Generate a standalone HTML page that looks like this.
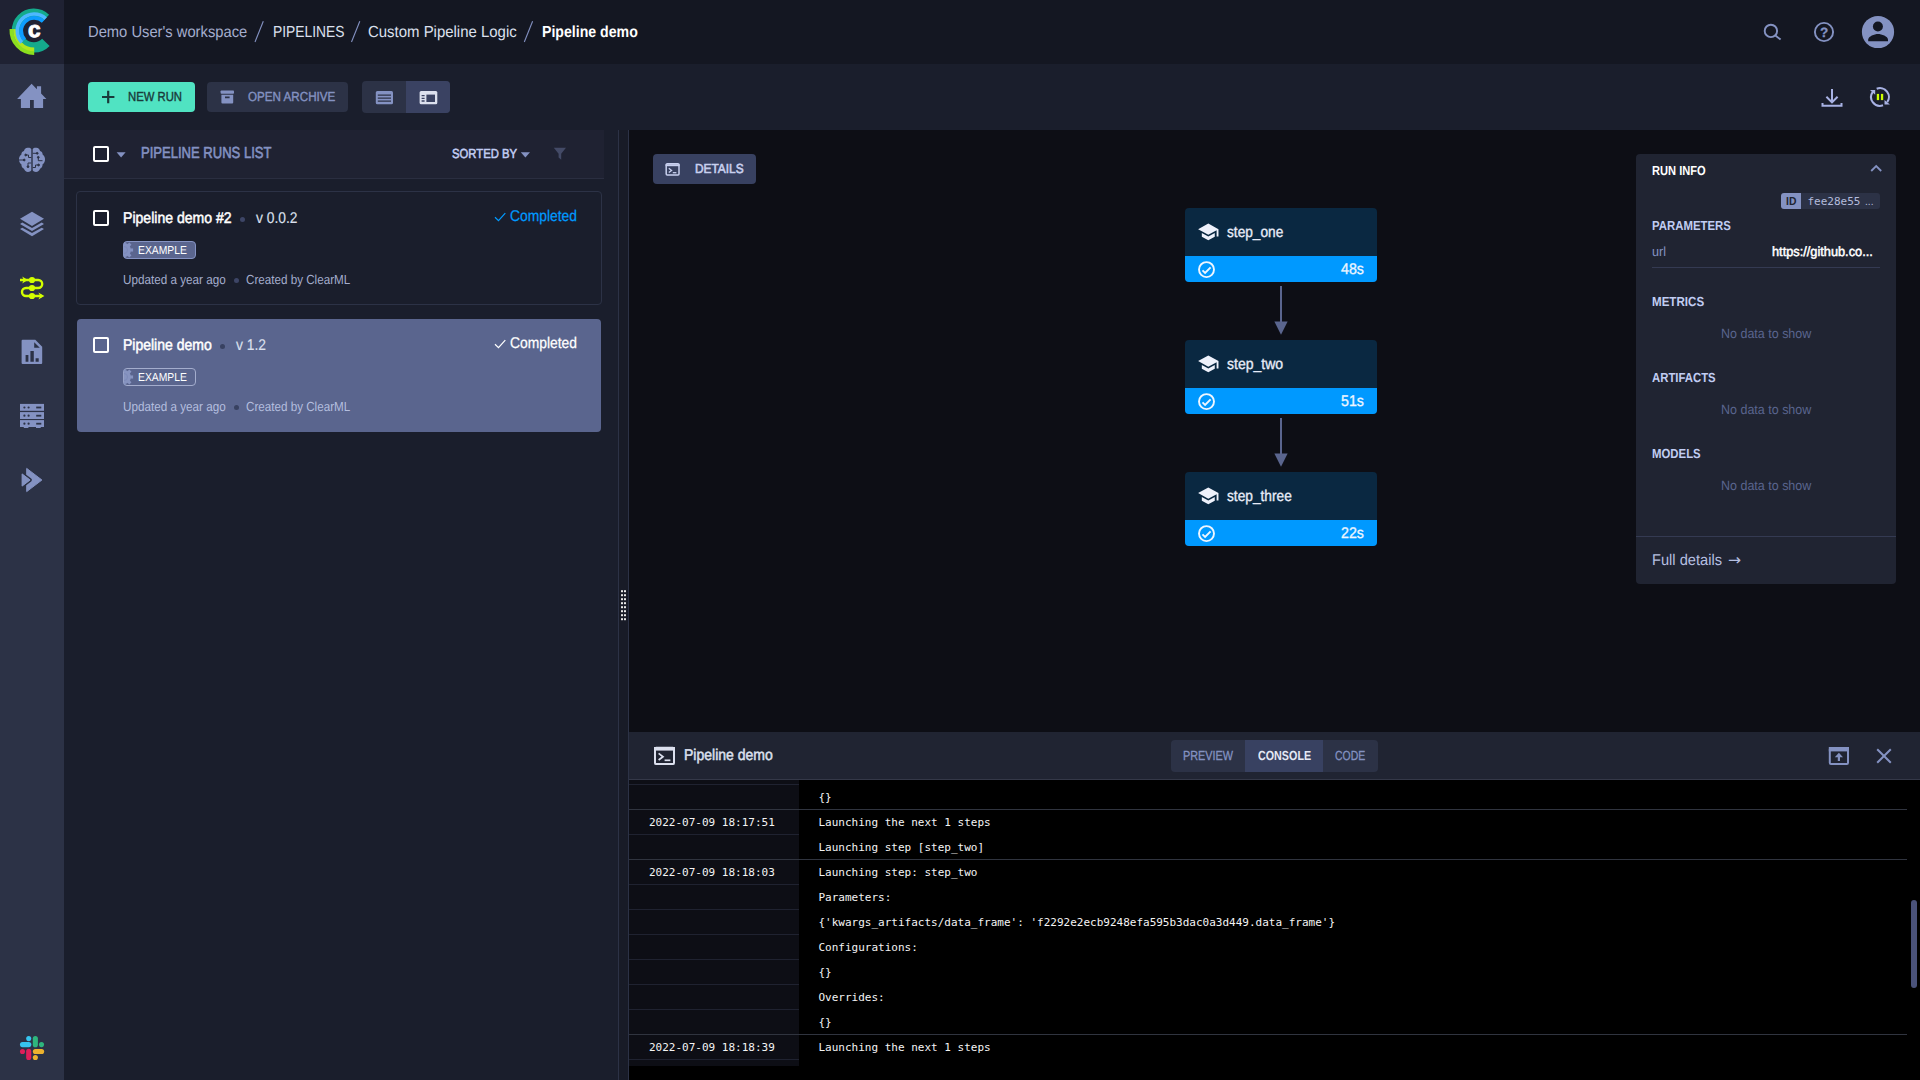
<!DOCTYPE html>
<html lang="en">
<head>
<meta charset="utf-8">
<title>Pipeline demo - ClearML</title>
<style>
*{box-sizing:border-box;margin:0;padding:0}
html,body{width:1920px;height:1080px;overflow:hidden;background:#1a1e2c;font-family:'Liberation Sans',sans-serif;color:#c1cdf3;text-rendering:geometricPrecision}
div,svg{position:absolute}
#header{left:0;top:0;width:1920px;height:64px;background:#141722}
#logo{left:0;top:0;width:64px;height:64px;background:#1f2233}
#sidebar{left:0;top:64px;width:64px;height:1016px;background:#2c3246}
#toolbar{left:64px;top:64px;width:1856px;height:66px;background:#1a1e2c}
#leftpanel{left:64px;top:130px;width:554px;height:950px;background:#1a1e2c}
#listhead{left:0;top:0;width:540px;height:49px;background:#1f2232;border-bottom:1px solid #2a2e40}
#divider{left:618px;top:130px;width:11px;height:950px;background:#181b27;border-left:1px solid #2c3246;border-right:1px solid #2c3246}
#canvas{left:629px;top:130px;width:1291px;height:602px;background:#0d0e15}
#bpanel{left:629px;top:732px;width:1291px;height:48px;background:#202432;border-bottom:1px solid #343848}
#console{left:629px;top:780px;width:1291px;height:300px;background:#000}
#tscol{left:0;top:0;width:170px;height:286px;background:#0d0e15}
.rl{left:0;height:1px;width:170px;background:#1f2230}
.fl{left:0;height:1px;width:1278px;background:#30343f}
.t{position:absolute;white-space:pre;line-height:1;transform-origin:0 50%}
.m{text-rendering:auto}
.btn{border-radius:4px}
.card{left:76px;width:526px;height:114px;border-radius:4px}
.cb{width:16px;height:16px;border:2px solid #fff;border-radius:2px}
.tag{height:18px;width:73px;border-radius:4px;border:1px solid #8492c2;background:#5a658e;overflow:hidden}
.dot{border-radius:50%}
.node{width:192px;height:74px;border-radius:4px;background:#0a2841;overflow:hidden}
.node i{position:absolute;left:0;top:48px;width:192px;height:26px;background:#0099ff}
</style>
</head>
<body>
<div id="header"></div>
<div id="logo"></div>
<div id="sidebar"></div>
<div id="toolbar">
  <div class="btn" style="left:24px;top:18px;width:107px;height:30px;background:#50e3c2"></div>
  <div class="btn" style="left:143px;top:18px;width:141px;height:30px;background:#2c3246"></div>
  <div class="btn" style="left:298px;top:17px;width:88px;height:32px;background:#2c3246;overflow:hidden"><div style="left:44px;top:0;width:44px;height:32px;background:#3a4262"></div></div>
</div>
<div id="leftpanel">
  <div id="listhead"></div>
  <div class="cb" style="left:29px;top:16px"></div>
</div>
<div class="card" style="top:191px;border:1px solid #2c3246"></div>
<div class="card" style="left:77px;top:319px;width:524px;height:113px;background:#5a658e"></div>
<div class="cb" style="left:93px;top:210px"></div>
<div class="cb" style="left:93px;top:337px"></div>
<div class="tag" style="left:123px;top:241px"></div>
<div class="tag" style="left:123px;top:368px;background:#5a658e;border-color:#a4adcd"></div>
<div class="dot" style="left:240px;top:216.5px;width:5px;height:5px;background:#3d4566"></div>
<div class="dot" style="left:233.5px;top:278px;width:5px;height:5px;background:#3d4566"></div>
<div class="dot" style="left:220px;top:343.5px;width:5px;height:5px;background:#384161"></div>
<div class="dot" style="left:233.5px;top:405px;width:5px;height:5px;background:#384161"></div>
<div id="divider"></div>
<div id="canvas">
  <div class="btn" style="left:24px;top:24px;width:103px;height:30px;background:#384161"></div>
  <div class="node" style="left:556px;top:78px"><i></i></div>
  <div class="node" style="left:556px;top:210px"><i></i></div>
  <div class="node" style="left:556px;top:342px"><i></i></div>
  <div id="runinfo" style="left:1007px;top:24px;width:260px;height:430px;background:#202432;border-radius:4px">
    <div style="left:145px;top:39px;width:20px;height:16px;background:#8492c2;border-radius:3px 0 0 3px"></div>
    <div style="left:165px;top:39px;width:79px;height:16px;background:#2c3246;border-radius:0 3px 3px 0"></div>
    <div style="left:16px;top:113px;width:228px;height:1px;background:#343a52"></div>
    <div style="left:0;top:382px;width:260px;height:1px;background:#343a52"></div>
  </div>
</div>
<div id="bpanel">
  <div class="btn" style="left:542px;top:8px;width:207px;height:32px;background:#2c3246;overflow:hidden"><div style="left:74px;top:0;width:78px;height:32px;background:#384161"></div></div>
</div>
<div id="console">
  <div id="tscol"></div>
  <div class="rl" style="top:4px"></div>
  <div class="fl" style="top:29px"></div>
  <div class="rl" style="top:54px"></div>
  <div class="fl" style="top:79px"></div>
  <div class="rl" style="top:104px"></div>
  <div class="rl" style="top:129px"></div>
  <div class="rl" style="top:154px"></div>
  <div class="rl" style="top:179px"></div>
  <div class="rl" style="top:204px"></div>
  <div class="rl" style="top:229px"></div>
  <div class="fl" style="top:254px"></div>
  <div class="rl" style="top:279px"></div>
  <div style="left:1282px;top:120px;width:6px;height:88px;border-radius:3px;background:#4a527a"></div>
</div>
<svg width="1920" height="1080" viewBox="0 0 1920 1080" style="left:0;top:0" fill="none">
<path d="M45.88,42.27A16.8,16.8 0 1 1 45.47,18.52" stroke="#14aa8c" stroke-width="10.4"/>
<path d="M34.20,53.00A22.8,22.8 0 0 1 11.43,29.01" stroke="#8ce01e" stroke-width="3.8"/>
<path d="M34.20,49.40A19.2,19.2 0 0 1 15.03,29.20" stroke="#b0e61e" stroke-width="3.6"/>
<path d="M21.91,42.36A16.8,16.8 0 0 1 45.66,18.61" stroke="#4db8ff" stroke-width="3.7"/>
<path d="M24.62,39.83A13.1,13.1 0 0 1 43.13,21.32" stroke="#0d9cff" stroke-width="3.8"/>
<text x="27.9" y="37.4" font-family="'Liberation Sans',sans-serif" font-weight="700" font-size="22.5" fill="#fff" stroke="#fff" stroke-width="0.9" stroke-linejoin="round" textLength="12.6" lengthAdjust="spacingAndGlyphs">c</text>
<path fill="#8492c2" d="M31.6,83.8L17.1,98.9H20.9V107.9H30V100.1H33.8V107.9H43.1V98.9H46.4L41.1,93.4V86.2H36.9V89.2Z"/>
<g fill="#8492c2"><path d="M31.3,149.2C30.6,148 29.2,147.6 27.6,147.8C25.6,148 24.3,149.3 24,150.9C22.3,151.3 21.2,152.8 21.4,154.6C19.8,155.6 18.8,157.6 19,159.9C19.2,162.2 20.3,163.6 21.5,164.6C21.2,166.5 22.3,168.1 24,168.7C24.5,170.6 26.1,172 28,172C29.5,172 30.7,171.4 31.3,170.3Z"/><path d="M32.7,149.2C33.4,148 34.8,147.6 36.4,147.8C38.4,148 39.7,149.3 40,150.9C41.7,151.3 42.8,152.8 42.6,154.6C44.2,155.6 45.2,157.6 45,159.9C44.8,162.2 43.7,163.6 42.5,164.6C42.8,166.5 41.7,168.1 40,168.7C39.5,170.6 37.9,172 36,172C34.5,172 33.3,171.4 32.7,170.3Z"/></g>
<g stroke="#2c3246" stroke-width="1" fill="#2c3246"><path d="M26,155H28.5V157.5H31.3" fill="none"/><circle cx="25.7" cy="155" r="0.9"/><path d="M19,160H24" fill="none"/><circle cx="24.2" cy="160" r="0.9"/><path d="M31.3,163H28V166.5" fill="none"/><circle cx="28" cy="166.7" r="0.9"/><path d="M32.7,153.3H37" fill="none"/><circle cx="37.2" cy="153.3" r="0.9"/><path d="M38.3,157.5V160.7H42.5" fill="none"/><circle cx="38.3" cy="157.3" r="0.9"/><path d="M32.7,167.5H35.5V165H38.5" fill="none"/><circle cx="38.6" cy="165" r="0.9"/></g>
<g fill="#8492c2"><path d="M32,211.8L44,218.7L32,226L20,218.7Z"/><path d="M20,223.9L22.3,222.5L32,227.9L41.7,222.5L44,223.9L32,231.1Z"/><path d="M20,229.1L22.3,227.7L32,233.1L41.7,227.7L44,229.1L32,236.3Z"/></g>
<g stroke="#d3ff00" stroke-width="2.4" fill="none"><path d="M20,280H38.2A4,4 0 0 1 38.2,288H26A4,4 0 0 0 26,296H42"/></g>
<g fill="#d3ff00"><circle cx="32" cy="280" r="3.1"/><circle cx="32" cy="288" r="3.1"/><circle cx="32" cy="296" r="3.1"/><path d="M22.2,276.6L27.8,280L22.2,283.4L23.8,280Z"/><path d="M38.4,292.6L44.4,296L38.4,299.4L40.2,296Z"/></g>
<path fill="#8492c2" fill-rule="evenodd" d="M22.6,339.8H35.3L42.2,346.7V363A1,1 0 0 1 41.2,364H22.6A1,1 0 0 1 21.6,363V340.8A1,1 0 0 1 22.6,339.8ZM34.2,342.2V347.8H39.8ZM25.6,355.1H28.4V361.8H25.6ZM30.4,351.1H33.8V361.8H30.4ZM35.6,358.2H38.7V361.8H35.6Z"/>
<rect x="20" y="403.9" width="24" height="6.9" fill="#8492c2"/>
<g fill="#2c3246"><circle cx="24.4" cy="407.5" r="1.1"/><circle cx="28.6" cy="407.5" r="1.1"/><rect x="36.2" y="406.6" width="5.1" height="1.8"/></g>
<rect x="20" y="412.1" width="24" height="6.9" fill="#8492c2"/>
<g fill="#2c3246"><circle cx="24.4" cy="415.7" r="1.1"/><circle cx="28.6" cy="415.7" r="1.1"/><rect x="36.2" y="414.8" width="5.1" height="1.8"/></g>
<rect x="20" y="420.1" width="24" height="6.9" fill="#8492c2"/>
<g fill="#2c3246"><circle cx="24.4" cy="423.7" r="1.1"/><circle cx="28.6" cy="423.7" r="1.1"/><rect x="36.2" y="422.8" width="5.1" height="1.8"/></g>
<rect x="23.8" y="427" width="4.6" height="1" fill="#8492c2"/><rect x="36" y="427" width="4.7" height="1" fill="#8492c2"/>
<path d="M26.7,468.4L41.9,480L26.7,491.600Z" fill="#8492c2" stroke="#8492c2" stroke-width="1" stroke-linejoin="round"/><path d="M22.1,473.9L30.1,480L22.1,486.100Z" fill="#8492c2" stroke="#2c3246" stroke-width="3.6" stroke-linejoin="round" paint-order="stroke"/><path d="M22.1,473.9L30.1,480L22.1,486.100Z" fill="#8492c2" stroke="#8492c2" stroke-width="1" stroke-linejoin="round"/>
<g stroke-width="5.1" stroke-linecap="round"><path d="M28.7,1038.6V1038.61" stroke="#36c5f0"/><path d="M22.5,1044.6H28.8" stroke="#36c5f0"/><path d="M35.35,1038.6V1044.7" stroke="#2eb67d"/><path d="M41.5,1044.6V1044.61" stroke="#2eb67d"/><path d="M35.4,1051.55H41.6" stroke="#ecb22e"/><path d="M35.35,1057.5V1057.51" stroke="#ecb22e"/><path d="M28.7,1051.4V1057.5" stroke="#e01e5a"/><path d="M22.5,1051.55V1051.56" stroke="#e01e5a"/></g>
<path d="M263.3,21.2L255,42" stroke="#8492c2" stroke-width="1.1"/>
<path d="M359.8,21.2L351.5,42" stroke="#8492c2" stroke-width="1.1"/>
<path d="M532.6,21.2L524.3,42" stroke="#8492c2" stroke-width="1.1"/>
<g stroke="#8492c2" stroke-width="1.9"><circle cx="1770.9" cy="30.9" r="6.2"/><path d="M1775.4,35.6L1780.6,39.6"/><circle cx="1824" cy="32" r="9.1"/></g>
<text x="1824.1" y="37.1" font-family="'Liberation Sans',sans-serif" font-weight="700" font-size="13.5" fill="#8492c2" stroke="#8492c2" stroke-width="0.3" text-anchor="middle">?</text>
<circle cx="1878" cy="32" r="16.1" fill="#8492c2"/><circle cx="1877.9" cy="26.5" r="5" fill="#141722"/><path d="M1868.2,41.3V39.6C1868.2,36.4 1874.5,34 1878,34C1881.5,34 1888,36.4 1888,39.6V41.3Z" fill="#141722"/>
<path d="M102,97H114.4M108.2,90.8V103.2" stroke="#1a3a3a" stroke-width="2.2"/>
<g fill="#8492c2"><rect x="220.6" y="90.5" width="13.4" height="3.2" rx="0.8"/><path fill-rule="evenodd" d="M221.4,94.8H233.2V102.5A1,1 0 0 1 232.2,103.5H222.4A1,1 0 0 1 221.4,102.500ZM225,96.6H229.6V98.2H225Z"/></g>
<g fill="#8492c2"><rect x="375.8" y="91" width="17.2" height="13.3" rx="1.5"/></g><g stroke="#2c3246" stroke-width="1.3"><path d="M377.8,95.2H391M377.8,98.2H391M377.8,101.2H391" /></g>
<g><rect x="419.6" y="91" width="17.7" height="13.3" rx="1.5" fill="#dce0ee"/><rect x="426.4" y="94.6" width="8.6" height="7.4" fill="#3a4262"/><path d="M421.6,95.6H424.6M421.6,98.3H424.6M421.6,101H424.6" stroke="#3a4262" stroke-width="1.3"/></g>
<g stroke="#a8b2e4" stroke-width="2"><path d="M1832,89V101.6M1826.4,96.8L1832,102.4L1837.6,96.8"/><path d="M1822.5,103V105.8H1841.5V103"/></g>
<g stroke="#a8b2e4" stroke-width="2.1"><path d="M1876.67,88.75A8.9,8.9 0 0 1 1887.20,102.23"/><path d="M1883.04,105.36A8.9,8.9 0 0 1 1872.80,91.77"/></g>
<path d="M1884.5,100V104.6H1889.9Z" fill="#a8b2e4"/><path d="M1870,90H1875.2V94.700Z" fill="#a8b2e4"/>
<rect x="1876.8" y="93.9" width="2.3" height="6.2" fill="#ccff00"/><rect x="1880.9" y="93.9" width="2.3" height="6.2" fill="#ccff00"/>
<path d="M116.6,152.2H125.6L121.1,157.6Z" fill="#8492c2"/><path d="M520.8,152.3H530L525.4,157.5Z" fill="#8492c2"/>
<path d="M553.8,147.8H566L561.2,153.8V159.8L558.6,157.6V153.8Z" fill="#434a66"/>
<path d="M495,217.2L498.5,220.6L505.3,213.2" stroke="#009aff" stroke-width="1.25"/>
<clipPath id="tg0"><rect x="123.6" y="241.6" width="71.8" height="16.8" rx="3"/></clipPath>
<g clip-path="url(#tg0)"><g fill="#8492c2"><circle cx="124" cy="250" r="6.9"/><rect x="129.70" y="248.45" width="3.40" height="3.1" transform="rotate(0.0 124 250)"/><rect x="129.70" y="248.45" width="3.40" height="3.1" transform="rotate(45.0 124 250)"/><rect x="129.70" y="248.45" width="3.40" height="3.1" transform="rotate(90.0 124 250)"/><rect x="129.70" y="248.45" width="3.40" height="3.1" transform="rotate(135.0 124 250)"/><rect x="129.70" y="248.45" width="3.40" height="3.1" transform="rotate(180.0 124 250)"/><rect x="129.70" y="248.45" width="3.40" height="3.1" transform="rotate(225.0 124 250)"/><rect x="129.70" y="248.45" width="3.40" height="3.1" transform="rotate(270.0 124 250)"/><rect x="129.70" y="248.45" width="3.40" height="3.1" transform="rotate(315.0 124 250)"/></g><path d="M124,246.5A3.5,3.5 0 0 1 124,253.5" stroke="#7c89b8" stroke-width="0.9"/></g>
<path d="M495,344.2L498.5,347.6L505.3,340.2" stroke="#ffffff" stroke-width="1.25"/>
<clipPath id="tg127"><rect x="123.6" y="368.6" width="71.8" height="16.8" rx="3"/></clipPath>
<g clip-path="url(#tg127)"><g fill="#8794c0"><circle cx="124" cy="377" r="6.9"/><rect x="129.70" y="375.45" width="3.40" height="3.1" transform="rotate(0.0 124 377)"/><rect x="129.70" y="375.45" width="3.40" height="3.1" transform="rotate(45.0 124 377)"/><rect x="129.70" y="375.45" width="3.40" height="3.1" transform="rotate(90.0 124 377)"/><rect x="129.70" y="375.45" width="3.40" height="3.1" transform="rotate(135.0 124 377)"/><rect x="129.70" y="375.45" width="3.40" height="3.1" transform="rotate(180.0 124 377)"/><rect x="129.70" y="375.45" width="3.40" height="3.1" transform="rotate(225.0 124 377)"/><rect x="129.70" y="375.45" width="3.40" height="3.1" transform="rotate(270.0 124 377)"/><rect x="129.70" y="375.45" width="3.40" height="3.1" transform="rotate(315.0 124 377)"/></g><path d="M124,373.5A3.5,3.5 0 0 1 124,380.5" stroke="#7c89b8" stroke-width="0.9"/></g>
<g><rect x="666.2" y="163.8" width="12.8" height="11.2" rx="1" stroke="#c8d0ef" stroke-width="1.5"/><path d="M665.6,164.2H679.6V166.2H665.6Z" fill="#c8d0ef"/><path d="M668.8,168.2L671.6,170.4L668.8,172.6" stroke="#c8d0ef" stroke-width="1.3"/><path d="M672.8,172.7H676.4" stroke="#c8d0ef" stroke-width="1.3"/></g>
<g transform="translate(1197.2,220.8) scale(0.925)" fill="#eef1fb"><path d="M5 13.18v4L12 21l7-3.82v-4L12 17l-7-3.820zM12 3L1 9l11 6 9-4.910V17h2V9L12 3z"/></g>
<g stroke="#eef6ff" fill="none"><circle cx="1206.5" cy="269.6" r="7.5" stroke-width="1.9"/><path d="M1202.5,270.4L1205.1,273L1210.6,267.3" stroke-width="1.9"/></g>
<path d="M1281,286V322" stroke="#5a658e" stroke-width="2"/><path d="M1274.4,321.4H1287.6L1281,334.8Z" fill="#5a658e"/>
<g transform="translate(1197.2,352.8) scale(0.925)" fill="#eef1fb"><path d="M5 13.18v4L12 21l7-3.82v-4L12 17l-7-3.820zM12 3L1 9l11 6 9-4.910V17h2V9L12 3z"/></g>
<g stroke="#eef6ff" fill="none"><circle cx="1206.5" cy="401.6" r="7.5" stroke-width="1.9"/><path d="M1202.5,402.4L1205.1,405L1210.6,399.3" stroke-width="1.9"/></g>
<path d="M1281,418V454" stroke="#5a658e" stroke-width="2"/><path d="M1274.4,453.4H1287.6L1281,466.8Z" fill="#5a658e"/>
<g transform="translate(1197.2,484.8) scale(0.925)" fill="#eef1fb"><path d="M5 13.18v4L12 21l7-3.82v-4L12 17l-7-3.820zM12 3L1 9l11 6 9-4.910V17h2V9L12 3z"/></g>
<g stroke="#eef6ff" fill="none"><circle cx="1206.5" cy="533.6" r="7.5" stroke-width="1.9"/><path d="M1202.5,534.4L1205.1,537L1210.6,531.3" stroke-width="1.9"/></g>
<path d="M1871.2,171L1876.2,166L1881.2,171" stroke="#8492c2" stroke-width="1.8"/>
<g><rect x="655" y="747.7" width="19" height="16.4" rx="1.2" stroke="#dce0ee" stroke-width="2"/><path d="M654,747H675V750.6H654Z" fill="#dce0ee"/><path d="M658.6,753.4L663,756.7L658.6,760" stroke="#dce0ee" stroke-width="1.7"/><path d="M664.6,760.3H670.4" stroke="#dce0ee" stroke-width="1.7"/></g>
<g><rect x="1829.8" y="748" width="18.2" height="16" rx="1.2" stroke="#8492c2" stroke-width="2"/><path d="M1828.8,747H1849V751.4H1828.8Z" fill="#8492c2"/><path d="M1834.8,757.2L1838.9,752.8L1843,757.2H1840V761H1837.800V757.2Z" fill="#8492c2"/></g>
<path d="M1877.2,749.2L1890.8,762.8M1890.8,749.2L1877.2,762.8" stroke="#8492c2" stroke-width="2"/>
<rect x="621" y="590.2" width="2" height="2" fill="#e8e8e8"/>
<rect x="624" y="590.2" width="2" height="2" fill="#e8e8e8"/>
<rect x="621" y="594.2" width="2" height="2" fill="#e8e8e8"/>
<rect x="624" y="594.2" width="2" height="2" fill="#e8e8e8"/>
<rect x="621" y="598.2" width="2" height="2" fill="#e8e8e8"/>
<rect x="624" y="598.2" width="2" height="2" fill="#e8e8e8"/>
<rect x="621" y="602.2" width="2" height="2" fill="#e8e8e8"/>
<rect x="624" y="602.2" width="2" height="2" fill="#e8e8e8"/>
<rect x="621" y="606.2" width="2" height="2" fill="#e8e8e8"/>
<rect x="624" y="606.2" width="2" height="2" fill="#e8e8e8"/>
<rect x="621" y="610.2" width="2" height="2" fill="#e8e8e8"/>
<rect x="624" y="610.2" width="2" height="2" fill="#e8e8e8"/>
<rect x="621" y="614.2" width="2" height="2" fill="#e8e8e8"/>
<rect x="624" y="614.2" width="2" height="2" fill="#e8e8e8"/>
<rect x="621" y="618.2" width="2" height="2" fill="#e8e8e8"/>
<rect x="624" y="618.2" width="2" height="2" fill="#e8e8e8"/>
</svg>
<span class="t" style="left:88.30px;top:25.00px;font-size:16px;color:#a4adcd;transform:scaleX(0.9208);">Demo User's workspace</span>
<span class="t" style="left:272.50px;top:25.00px;font-size:16px;color:#dce0ee;transform:scaleX(0.8645);">PIPELINES</span>
<span class="t" style="left:368.00px;top:25.00px;font-size:16px;color:#dce0ee;transform:scaleX(0.9340);">Custom Pipeline Logic</span>
<span class="t" style="left:541.70px;top:25.00px;font-size:16px;color:#ffffff;font-weight:700;transform:scaleX(0.8832);">Pipeline demo</span>
<span class="t" style="left:128.20px;top:90.00px;font-size:13.1px;color:#1a3a3a;-webkit-text-stroke:0.4px #1a3a3a;transform:scaleX(0.8631);">NEW RUN</span>
<span class="t" style="left:247.70px;top:90.00px;font-size:13.1px;color:#8492c2;-webkit-text-stroke:0.4px #8492c2;transform:scaleX(0.8887);">OPEN ARCHIVE</span>
<span class="t" style="left:141.00px;top:146.00px;font-size:16px;color:#8492c2;-webkit-text-stroke:0.6px #8492c2;transform:scaleX(0.8154);">PIPELINE RUNS LIST</span>
<span class="t" style="left:452.20px;top:147.00px;font-size:13.1px;color:#c1cdf3;-webkit-text-stroke:0.55px #c1cdf3;transform:scaleX(0.8616);">SORTED BY</span>
<span class="t" style="left:123.30px;top:211.00px;font-size:15.5px;color:#ffffff;-webkit-text-stroke:0.5px #ffffff;transform:scaleX(0.9075);">Pipeline demo #2</span>
<span class="t" style="left:256.40px;top:211.00px;font-size:15.5px;color:#dce0ee;-webkit-text-stroke:0.15px #dce0ee;transform:scaleX(0.8897);">v 0.0.2</span>
<span class="t" style="left:138.20px;top:245.00px;font-size:11.6px;color:#ffffff;transform:scaleX(0.8926);">EXAMPLE</span>
<span class="t" style="left:123.30px;top:273.00px;font-size:13.1px;color:#a4adcd;transform:scaleX(0.8928);">Updated a year ago</span>
<span class="t" style="left:245.80px;top:273.00px;font-size:13.1px;color:#a4adcd;transform:scaleX(0.8893);">Created by ClearML</span>
<span class="t" style="left:509.80px;top:209.00px;font-size:15.5px;color:#009aff;-webkit-text-stroke:0.25px #009aff;transform:scaleX(0.8924);">Completed</span>
<span class="t" style="left:123.30px;top:338.00px;font-size:15.5px;color:#ffffff;-webkit-text-stroke:0.5px #ffffff;transform:scaleX(0.9029);">Pipeline demo</span>
<span class="t" style="left:236.25px;top:338.00px;font-size:15.5px;color:#dce0ee;-webkit-text-stroke:0.15px #dce0ee;transform:scaleX(0.8926);">v 1.2</span>
<span class="t" style="left:138.20px;top:372.00px;font-size:11.6px;color:#ffffff;transform:scaleX(0.8926);">EXAMPLE</span>
<span class="t" style="left:123.30px;top:400.00px;font-size:13.1px;color:#b4bedf;transform:scaleX(0.8928);">Updated a year ago</span>
<span class="t" style="left:245.80px;top:400.00px;font-size:13.1px;color:#b4bedf;transform:scaleX(0.8893);">Created by ClearML</span>
<span class="t" style="left:509.80px;top:336.00px;font-size:15.5px;color:#ffffff;-webkit-text-stroke:0.25px #ffffff;transform:scaleX(0.8924);">Completed</span>
<span class="t" style="left:694.75px;top:162.00px;font-size:13.1px;color:#c8d0ef;-webkit-text-stroke:0.6px #c8d0ef;transform:scaleX(0.9056);">DETAILS</span>
<span class="t" style="left:1226.90px;top:225.00px;font-size:15.5px;color:#e8ecf8;-webkit-text-stroke:0.35px #e8ecf8;transform:scaleX(0.8827);">step_one</span>
<span class="t" style="left:1341.30px;top:262.00px;font-size:15.5px;color:#eef6ff;-webkit-text-stroke:0.35px #eef6ff;transform:scaleX(0.9160);">48s</span>
<span class="t" style="left:1226.90px;top:357.00px;font-size:15.5px;color:#e8ecf8;-webkit-text-stroke:0.35px #e8ecf8;transform:scaleX(0.9042);">step_two</span>
<span class="t" style="left:1341.30px;top:394.00px;font-size:15.5px;color:#eef6ff;-webkit-text-stroke:0.35px #eef6ff;transform:scaleX(0.9160);">51s</span>
<span class="t" style="left:1226.90px;top:489.00px;font-size:15.5px;color:#e8ecf8;-webkit-text-stroke:0.35px #e8ecf8;transform:scaleX(0.8846);">step_three</span>
<span class="t" style="left:1341.30px;top:526.00px;font-size:15.5px;color:#eef6ff;-webkit-text-stroke:0.35px #eef6ff;transform:scaleX(0.9160);">22s</span>
<span class="t" style="left:1651.90px;top:164.00px;font-size:13.1px;color:#ffffff;font-weight:700;transform:scaleX(0.8484);">RUN INFO</span>
<span class="t" style="left:1785.85px;top:196.00px;font-size:11.6px;color:#202432;font-weight:700;transform:scaleX(0.8927);">ID</span>
<span class="t m" style="left:1807.50px;top:196.00px;font-size:11px;color:#b4bcdc;font-family:'DejaVu Sans Mono','Liberation Mono',monospace;">fee28e55</span>
<span class="t" style="left:1864.90px;top:197.00px;font-size:11px;color:#b4bcdc;transform:scaleX(0.9267);">...</span>
<span class="t" style="left:1651.90px;top:219.00px;font-size:13.1px;color:#c1cdf3;font-weight:700;transform:scaleX(0.8699);">PARAMETERS</span>
<span class="t" style="left:1652.00px;top:245.00px;font-size:13.3px;color:#8492c2;transform:scaleX(0.9471);">url</span>
<span class="t" style="left:1771.90px;top:245.00px;font-size:13.3px;color:#ffffff;-webkit-text-stroke:0.5px #ffffff;transform:scaleX(0.9603);">https://github.co...</span>
<span class="t" style="left:1651.90px;top:295.00px;font-size:13.1px;color:#c1cdf3;font-weight:700;transform:scaleX(0.8842);">METRICS</span>
<span class="t" style="left:1720.70px;top:327.00px;font-size:13.3px;color:#5a658e;transform:scaleX(0.9397);">No data to show</span>
<span class="t" style="left:1651.90px;top:371.00px;font-size:13.1px;color:#c1cdf3;font-weight:700;transform:scaleX(0.8670);">ARTIFACTS</span>
<span class="t" style="left:1720.70px;top:403.00px;font-size:13.3px;color:#5a658e;transform:scaleX(0.9397);">No data to show</span>
<span class="t" style="left:1651.90px;top:447.00px;font-size:13.1px;color:#c1cdf3;font-weight:700;transform:scaleX(0.8694);">MODELS</span>
<span class="t" style="left:1720.70px;top:479.00px;font-size:13.3px;color:#5a658e;transform:scaleX(0.9397);">No data to show</span>
<span class="t" style="left:1652.00px;top:553.00px;font-size:15.5px;color:#b5bfe0;transform:scaleX(0.9447);">Full details</span>
<span class="t" style="left:1727.50px;top:553.00px;font-size:15px;color:#b5bfe0;font-family:'DejaVu Sans',sans-serif;transform:scaleX(1.0415);">→</span>
<span class="t" style="left:683.70px;top:748.00px;font-size:15.5px;color:#dce0ee;-webkit-text-stroke:0.5px #dce0ee;transform:scaleX(0.9040);">Pipeline demo</span>
<span class="t" style="left:1183.00px;top:749.00px;font-size:13.1px;color:#8492c2;-webkit-text-stroke:0.3px #8492c2;transform:scaleX(0.8279);">PREVIEW</span>
<span class="t" style="left:1257.90px;top:749.00px;font-size:13.1px;color:#e4e8f5;font-weight:700;transform:scaleX(0.8201);">CONSOLE</span>
<span class="t" style="left:1335.40px;top:749.00px;font-size:13.1px;color:#8492c2;-webkit-text-stroke:0.3px #8492c2;transform:scaleX(0.7980);">CODE</span>
<span class="t m" style="left:818.50px;top:792.00px;font-size:11px;color:#f4f4f4;font-family:'DejaVu Sans Mono','Liberation Mono',monospace;">{}</span>
<span class="t m" style="left:649.00px;top:817.00px;font-size:11px;color:#f4f4f4;font-family:'DejaVu Sans Mono','Liberation Mono',monospace;">2022-07-09 18:17:51</span>
<span class="t m" style="left:818.50px;top:817.00px;font-size:11px;color:#f4f4f4;font-family:'DejaVu Sans Mono','Liberation Mono',monospace;">Launching the next 1 steps</span>
<span class="t m" style="left:818.50px;top:842.00px;font-size:11px;color:#f4f4f4;font-family:'DejaVu Sans Mono','Liberation Mono',monospace;">Launching step [step_two]</span>
<span class="t m" style="left:649.00px;top:867.00px;font-size:11px;color:#f4f4f4;font-family:'DejaVu Sans Mono','Liberation Mono',monospace;">2022-07-09 18:18:03</span>
<span class="t m" style="left:818.50px;top:867.00px;font-size:11px;color:#f4f4f4;font-family:'DejaVu Sans Mono','Liberation Mono',monospace;">Launching step: step_two</span>
<span class="t m" style="left:818.50px;top:892.00px;font-size:11px;color:#f4f4f4;font-family:'DejaVu Sans Mono','Liberation Mono',monospace;">Parameters:</span>
<span class="t m" style="left:818.50px;top:917.00px;font-size:11px;color:#f4f4f4;font-family:'DejaVu Sans Mono','Liberation Mono',monospace;">{'kwargs_artifacts/data_frame': 'f2292e2ecb9248efa595b3dac0a3d449.data_frame'}</span>
<span class="t m" style="left:818.50px;top:942.00px;font-size:11px;color:#f4f4f4;font-family:'DejaVu Sans Mono','Liberation Mono',monospace;">Configurations:</span>
<span class="t m" style="left:818.50px;top:967.00px;font-size:11px;color:#f4f4f4;font-family:'DejaVu Sans Mono','Liberation Mono',monospace;">{}</span>
<span class="t m" style="left:818.50px;top:992.00px;font-size:11px;color:#f4f4f4;font-family:'DejaVu Sans Mono','Liberation Mono',monospace;">Overrides:</span>
<span class="t m" style="left:818.50px;top:1017.00px;font-size:11px;color:#f4f4f4;font-family:'DejaVu Sans Mono','Liberation Mono',monospace;">{}</span>
<span class="t m" style="left:649.00px;top:1042.00px;font-size:11px;color:#f4f4f4;font-family:'DejaVu Sans Mono','Liberation Mono',monospace;">2022-07-09 18:18:39</span>
<span class="t m" style="left:818.50px;top:1042.00px;font-size:11px;color:#f4f4f4;font-family:'DejaVu Sans Mono','Liberation Mono',monospace;">Launching the next 1 steps</span>
</body>
</html>
